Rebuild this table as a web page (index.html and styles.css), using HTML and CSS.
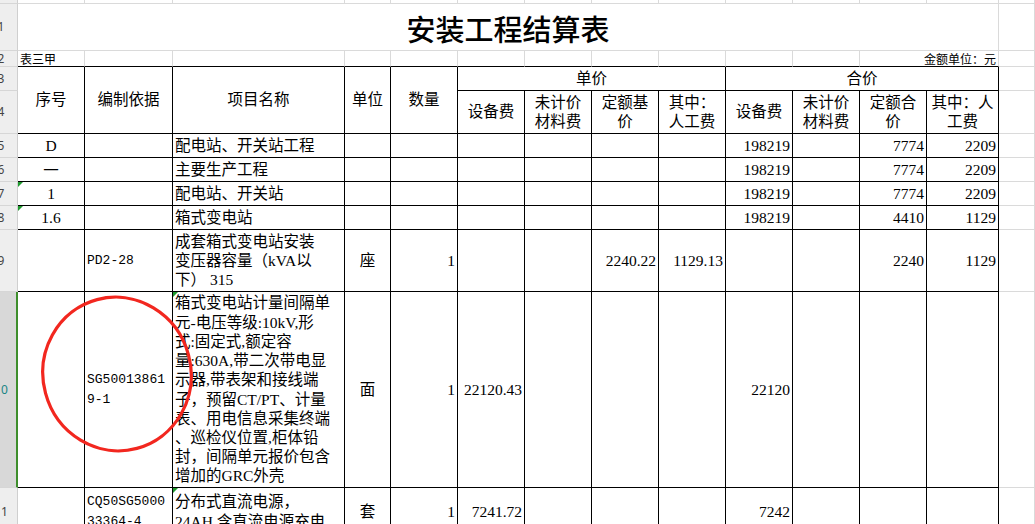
FILE: index.html
```html
<!DOCTYPE html>
<html lang="zh-CN">
<head>
<meta charset="utf-8">
<title>安装工程结算表</title>
<link rel="stylesheet" href="styles.css">
</head>
<body>
<div class="sheet">
  <div class="grid">
    <!-- top strip -->
    <div class="rh"></div>
    <div></div><div></div><div></div><div></div><div></div><div></div><div></div>
    <div></div><div></div><div></div><div></div><div></div><div></div><div></div>

    <!-- row 1 -->
    <div class="rh"><span>1</span></div>
    <div class="title"><span>安装工程结算表</span></div>
    <div></div>

    <!-- row 2 -->
    <div class="rh"><span>2</span></div>
    <div class="top small l"><span>表三甲</span></div>
    <div class="top"></div><div class="top"></div><div class="top"></div><div class="top"></div>
    <div class="top"></div><div class="top"></div><div class="top"></div><div class="top"></div>
    <div class="top"></div><div class="top"></div>
    <div class="top small r span2c"><span>金额单位：元</span></div>
    <div></div>

    <!-- row 3 -->
    <div class="rh"><span>3</span></div>
    <div class="t ctr span2r"><span>序号</span></div>
    <div class="t ctr span2r"><span>编制依据</span></div>
    <div class="t ctr span2r"><span>项目名称</span></div>
    <div class="t ctr span2r"><span>单位</span></div>
    <div class="t ctr span2r"><span>数量</span></div>
    <div class="t ctr span4c"><span>单价</span></div>
    <div class="t ctr span4c"><span>合价</span></div>
    <div></div>

    <!-- row 4 -->
    <div class="rh"><span>4</span></div>
    <div class="t ctr"><span>设备费</span></div>
    <div class="t ctr"><span>未计价<br>材料费</span></div>
    <div class="t ctr"><span>定额基<br>价</span></div>
    <div class="t ctr"><span>其中：<br>人工费</span></div>
    <div class="t ctr"><span>设备费</span></div>
    <div class="t ctr"><span>未计价<br>材料费</span></div>
    <div class="t ctr"><span>定额合<br>价</span></div>
    <div class="t ctr"><span>其中：人<br>工费</span></div>
    <div></div>

    <!-- row 5 -->
    <div class="rh"><span>5</span></div>
    <div class="t ctr"><span>D</span></div>
    <div class="t"></div>
    <div class="t l"><span>配电站、开关站工程</span></div>
    <div class="t"></div><div class="t"></div><div class="t"></div><div class="t"></div><div class="t"></div><div class="t"></div>
    <div class="t r"><span>198219</span></div>
    <div class="t"></div>
    <div class="t r"><span>7774</span></div>
    <div class="t r"><span>2209</span></div>
    <div></div>

    <!-- row 6 -->
    <div class="rh"><span>6</span></div>
    <div class="t ctr"><span class="cjk">一</span></div>
    <div class="t"></div>
    <div class="t l"><span>主要生产工程</span></div>
    <div class="t"></div><div class="t"></div><div class="t"></div><div class="t"></div><div class="t"></div><div class="t"></div>
    <div class="t r"><span>198219</span></div>
    <div class="t"></div>
    <div class="t r"><span>7774</span></div>
    <div class="t r"><span>2209</span></div>
    <div></div>

    <!-- row 7 -->
    <div class="rh"><span>7</span></div>
    <div class="t ctr tri"><span>1</span></div>
    <div class="t"></div>
    <div class="t l"><span>配电站、开关站</span></div>
    <div class="t"></div><div class="t"></div><div class="t"></div><div class="t"></div><div class="t"></div><div class="t"></div>
    <div class="t r"><span>198219</span></div>
    <div class="t"></div>
    <div class="t r"><span>7774</span></div>
    <div class="t r"><span>2209</span></div>
    <div></div>

    <!-- row 8 -->
    <div class="rh"><span>8</span></div>
    <div class="t ctr tri"><span>1.6</span></div>
    <div class="t"></div>
    <div class="t l"><span>箱式变电站</span></div>
    <div class="t"></div><div class="t"></div><div class="t"></div><div class="t"></div><div class="t"></div><div class="t"></div>
    <div class="t r"><span>198219</span></div>
    <div class="t"></div>
    <div class="t r"><span>4410</span></div>
    <div class="t r"><span>1129</span></div>
    <div></div>

    <!-- row 9 -->
    <div class="rh"><span>9</span></div>
    <div class="t"></div>
    <div class="t l"><span class="code">PD2-28</span></div>
    <div class="t l"><span>成套箱式变电站安装<br>变压器容量（kVA以<br>下） 315</span></div>
    <div class="t ctr"><span>座</span></div>
    <div class="t r"><span>1</span></div>
    <div class="t"></div>
    <div class="t"></div>
    <div class="t r"><span>2240.22</span></div>
    <div class="t r"><span>1129.13</span></div>
    <div class="t"></div>
    <div class="t"></div>
    <div class="t r"><span>2240</span></div>
    <div class="t r"><span>1129</span></div>
    <div></div>

    <!-- row 10 -->
    <div class="rh sel"><span>10</span></div>
    <div class="t"></div>
    <div class="t l"><span class="code">SG50013861<br>9-1</span></div>
    <div class="t l tri"><span>箱式变电站计量间隔单<br>元-电压等级:10kV,形<br>式:固定式,额定容<br>量:630A,带二次带电显<br>示器,带表架和接线端<br>子，预留CT/PT、计量<br>表、用电信息采集终端<br>、巡检仪位置,柜体铅<br>封，间隔单元报价包含<br>增加的GRC外壳</span></div>
    <div class="t ctr"><span>面</span></div>
    <div class="t r"><span>1</span></div>
    <div class="t r"><span>22120.43</span></div>
    <div class="t"></div><div class="t"></div><div class="t"></div>
    <div class="t r"><span>22120</span></div>
    <div class="t"></div><div class="t"></div><div class="t"></div>
    <div></div>

    <!-- row 11 -->
    <div class="rh"><span>11</span></div>
    <div class="t"></div>
    <div class="t l"><span class="code">CQ50SG5000<br>33364-4</span></div>
    <div class="t l tri"><span>分布式直流电源，<br>24AH,含直流电源充电</span></div>
    <div class="t ctr"><span>套</span></div>
    <div class="t r"><span>1</span></div>
    <div class="t r"><span>7241.72</span></div>
    <div class="t"></div><div class="t"></div><div class="t"></div>
    <div class="t r"><span>7242</span></div>
    <div class="t"></div><div class="t"></div><div class="t"></div>
    <div></div>
  </div>

  <svg class="mark" width="160" height="166" viewBox="0 0 160 166" aria-hidden="true">
    <ellipse cx="79" cy="82" rx="74" ry="77" transform="rotate(-15 79 82)" fill="none" stroke="#f2271f" stroke-width="3.2"/>
  </svg>
</div>
</body>
</html>
```

FILE: styles.css
```css
html, body {
  margin: 0;
  padding: 0;
  background: #ffffff;
  overflow: hidden;
}

.sheet {
  position: relative;
  width: 1035px;
  height: 524px;
  overflow: hidden;
  font-family: "Liberation Serif", "Noto Sans CJK SC", serif;
  font-size: 15.5px;
  color: #000;
}

.grid {
  display: grid;
  grid-template-columns: 18px 67px 88px 172px 46px repeat(8, 67px) 72px 36px;
  grid-template-rows: 4px 47px 16px 24px 43px 24px 24px 24px 24px 62px 196px 48px;
}

.grid > div {
  box-sizing: border-box;
  border-right: 1px solid #dadada;
  border-bottom: 1px solid #dadada;
  display: flex;
  align-items: center;
  padding: 0 2px;
  white-space: nowrap;
  line-height: 19.2px;
  overflow: hidden;
  min-width: 0;
}

.grid > div > span {
  display: block;
}

.grid > .t {
  border-right-color: #000;
  border-bottom-color: #000;
}

.grid > .top {
  border-bottom-color: #000;
}

.l { justify-content: flex-start; text-align: left; }
.ctr { justify-content: center; text-align: center; }
.r { justify-content: flex-end; text-align: right; }

.span2r { grid-row: span 2; }
.span2c { grid-column: span 2; }
.span4c { grid-column: span 4; }

.grid > .title {
  grid-column: span 13;
  justify-content: center;
  font-family: "Noto Sans CJK SC", sans-serif;
  font-size: 29px;
  font-weight: 500;
  line-height: 34px;
  padding-top: 1px;
}

.grid > .small {
  font-family: "Noto Sans CJK SC", sans-serif;
  font-size: 12px;
  line-height: 15px;
  align-items: center;
}

.code {
  font-family: "Liberation Mono", monospace;
  font-size: 13px;
  letter-spacing: 0;
}

.cjk {
  font-family: "Noto Sans CJK SC", sans-serif;
}

.grid > .rh {
  background: #eeeeee;
  border-right-color: #cfcfcf;
  border-bottom-color: #d6d6d6;
  padding: 0;
  justify-content: flex-start;
  font-family: "Noto Sans", sans-serif;
  font-size: 12px;
  color: #444;
}

.rh > span {
  flex: 0 0 32px;
  margin-left: -15px;
  text-align: center;
}

.grid > .rh.sel {
  background: #d8d8d8;
  border-right: 2px solid #3e8e2c;
  color: #1b8585;
}

.tri {
  position: relative;
}

.tri::before {
  content: "";
  position: absolute;
  left: 0;
  top: 0;
  border-top: 5px solid #1f9a2e;
  border-right: 5px solid transparent;
}

.mark {
  position: absolute;
  left: 38px;
  top: 292px;
}
```
